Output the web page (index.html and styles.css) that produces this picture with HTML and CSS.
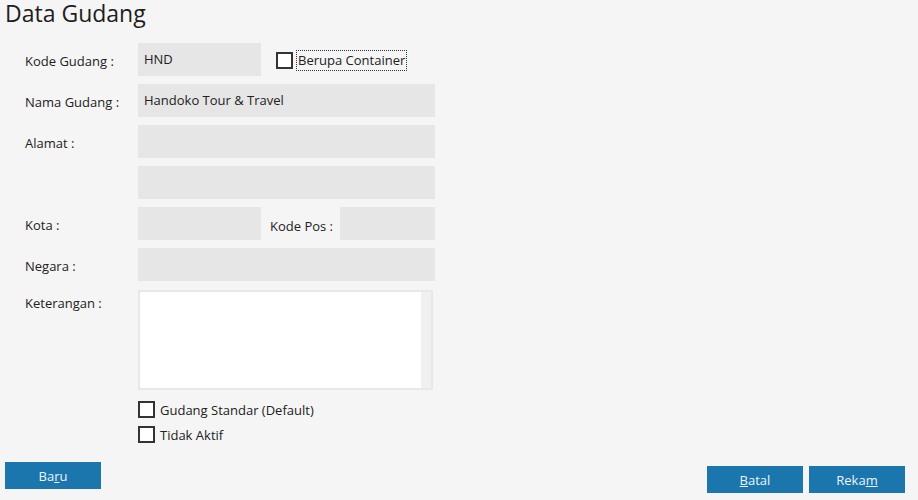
FILE: index.html
```html
<!DOCTYPE html>
<html lang="id">
<head>
    <meta charset="UTF-8">
    <title>Data Gudang</title>
    <link rel="stylesheet" href="styles.css">
</head>
<body>
    <div class="page">
        <h1 class="title">Data Gudang</h1>

        <div class="form">
            <div class="row">
                <label class="label">Kode Gudang :</label>
                <div class="field short">HND</div>
                <div class="check inline focus">
                    <span class="box"></span>
                    <span class="check-text">Berupa Container</span>
                </div>
            </div>

            <div class="row">
                <label class="label">Nama Gudang :</label>
                <div class="field wide">Handoko Tour &amp; Travel</div>
            </div>

            <div class="row">
                <label class="label">Alamat :</label>
                <div class="field wide"></div>
            </div>

            <div class="row">
                <label class="label"></label>
                <div class="field wide"></div>
            </div>

            <div class="row">
                <label class="label">Kota :</label>
                <div class="field short"></div>
                <span class="sub-label">Kode Pos :</span>
                <div class="field zip"></div>
            </div>

            <div class="row">
                <label class="label">Negara :</label>
                <div class="field wide"></div>
            </div>

            <div class="row top">
                <label class="label">Keterangan :</label>
                <div class="memo">
                    <div class="memo-area"></div>
                    <div class="memo-scroll"></div>
                </div>
            </div>

            <div class="options">
                <div class="check">
                    <span class="box"></span>
                    <span class="check-text">Gudang Standar (Default)</span>
                </div>
                <div class="check">
                    <span class="box"></span>
                    <span class="check-text">Tidak Aktif</span>
                </div>
            </div>
        </div>

        <div class="footer">
            <button class="button">Ba<u>r</u>u</button>
            <div class="footer-right">
                <button class="button"><u>B</u>atal</button>
                <button class="button">Reka<u>m</u></button>
            </div>
        </div>
    </div>
</body>
</html>
```

FILE: styles.css
```css
body {
    margin: 0;
    background-color: #f5f5f5;
    font-family: "Open Sans", Arial, sans-serif;
    font-size: 13px;
    color: #222;
}

.page {
    width: 918px;
    height: 500px;
}

.title {
    margin: 0;
    padding: 0 0 0 5px;
    font-size: 23px;
    font-weight: normal;
    line-height: 27px;
    height: 43px;
    color: #1e1e1e;
}

.form {
    padding-left: 25px;
}

.row {
    display: flex;
    align-items: center;
    height: 33px;
    margin-bottom: 8px;
}

.row.top {
    align-items: flex-start;
    height: auto;
    margin-bottom: 0;
}

.label {
    width: 113px;
    flex-shrink: 0;
    padding-top: 3px;
}

.row.top .label {
    padding-top: 5px;
}

.field {
    height: 33px;
    background-color: #e6e6e6;
    box-sizing: border-box;
    padding: 0 6px;
    line-height: 33px;
}

.field.short {
    width: 123px;
}

.field.wide {
    width: 297px;
}

.field.zip {
    width: 95px;
}

.sub-label {
    margin-left: 9px;
    width: 70px;
    padding-top: 4px;
}

.memo {
    display: flex;
    width: 295px;
    height: 100px;
    margin-top: 1px;
    border: 2px solid #e8e8e8;
    box-sizing: border-box;
    background-color: #fff;
}

.memo-area {
    flex: 1;
}

.memo-scroll {
    width: 10px;
    background-color: #f0f0f0;
}

.options {
    padding-left: 113px;
    padding-top: 11px;
}

.check {
    display: flex;
    align-items: center;
    height: 17px;
    margin-bottom: 8px;
}

.check.inline {
    margin-left: 15px;
    margin-bottom: 0;
    padding-top: 2px;
}

.box {
    width: 17px;
    height: 17px;
    box-sizing: border-box;
    border: 2px solid #333;
    background-color: #fff;
    flex-shrink: 0;
}

.check-text {
    margin-left: 5px;
}

.focus .check-text {
    margin-left: 4px;
    padding: 0 1px;
    outline: 1px dotted #333;
    line-height: 19px;
}

.footer {
    display: flex;
    justify-content: space-between;
    padding: 0 13px 0 5px;
    margin-top: 19px;
}

.footer-right {
    display: flex;
    gap: 6px;
    margin-top: 4px;
}

.button {
    width: 96px;
    height: 27px;
    border: none;
    background-color: #1a76ad;
    color: #eef4f8;
    font-family: "Open Sans", Arial, sans-serif;
    font-size: 13px;
    padding: 0;
}
```
